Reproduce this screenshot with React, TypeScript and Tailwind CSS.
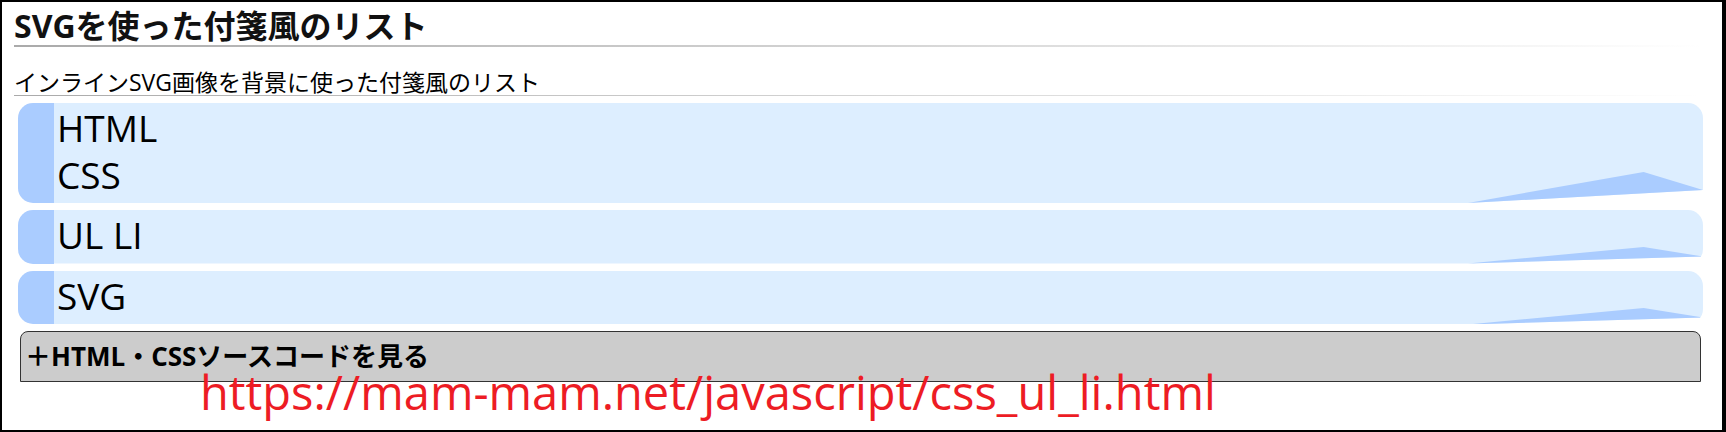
const notes = [['HTML', 'CSS'], ['UL LI'], ['SVG']];

const NoteBg = () => (
  <svg className="absolute inset-0 h-full w-full" viewBox="0 0 100 100" preserveAspectRatio="none">
    <polygon points="0,0 100,0 100,87 85.75,100 0,100" fill="#ddeeff" />
    <polygon points="85.75,100 96.4,69 100,87" fill="#aaccff" />
  </svg>
);

export default function App() {
  return (
    <div className="relative h-[432px] w-full overflow-hidden border-2 border-r-4 border-black bg-white font-['Open_Sans','Noto_Sans_CJK_JP',sans-serif] text-black">
      <div className="pl-[12px] pr-[19px]">
        {/* title */}
        <h1 className="h-[43px] whitespace-nowrap pt-[2px] text-[32px] font-bold leading-[43px] text-[#111]">
          SVGを使った付箋風のリスト
        </h1>
        <div className="h-[2px] bg-linear-to-r from-[#aaaaaa] to-white" />

        <p className="mt-[22px] h-[26px] whitespace-nowrap text-[23px] leading-[26px]">
          インラインSVG画像を背景に使った付箋風のリスト
        </p>
        <div className="h-px bg-linear-to-r from-[#aaaaaa] to-white" />

        {/* sticky notes */}
        <ul className="ml-[4px] mt-[7px] flex flex-col gap-[7px]">
          {notes.map((lines) => (
            <li
              key={lines.join('-')}
              className="relative overflow-hidden rounded-[15px] border-l-[36px] border-[#aaccff] pb-[5px] pl-[3px] pt-[2px] text-[37px] leading-[46.5px]"
            >
              <NoteBg />
              <div className="relative">
                {lines.map((l) => (
                  <div key={l}>{l}</div>
                ))}
              </div>
            </li>
          ))}
        </ul>

        <div className="ml-[6px] mr-[2px] mt-[7px] flex h-[51px] items-center whitespace-nowrap rounded-t-[8px] border border-[#333] bg-[#cccccc] pl-[4px] text-[26px] font-bold">
          ＋HTML・CSSソースコードを見る
        </div>
      </div>

      {/* url stamp */}
      <div className="absolute left-[198px] top-[367px] whitespace-nowrap text-[47px] leading-[46px] text-[#ed1c24]">
        https://mam-mam.net/javascript/css_ul_li.html
      </div>
    </div>
  );
}
